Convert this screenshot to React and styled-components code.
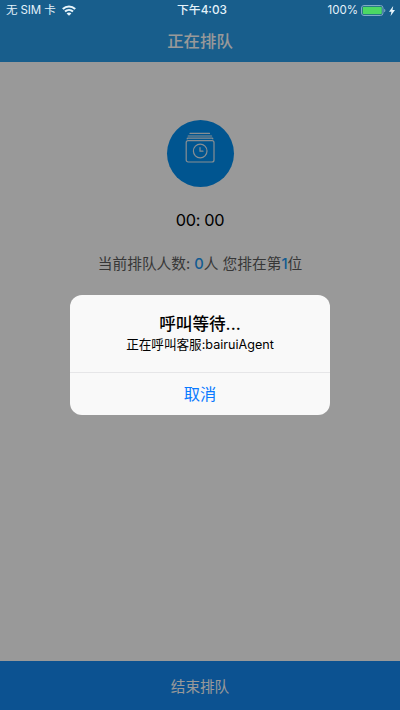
import React from "react";
import styled, { createGlobalStyle } from "styled-components";

const GlobalStyle = createGlobalStyle`
  * {
    box-sizing: border-box;
  }
  body {
    margin: 0;
    font-family: Inter, "Noto Sans CJK SC", sans-serif;
  }
`;

const Screen = styled.div`
  position: relative;
  display: flex;
  flex-direction: column;
  width: 400px;
  height: 710px;
  overflow: hidden;
  background: #fff;
`;

const Header = styled.header`
  display: flex;
  flex-direction: column;
  height: 62px;
  background: #289de9;
`;

const StatusBar = styled.div`
  position: relative;
  z-index: 2;
  display: grid;
  grid-template-columns: 1fr auto 1fr;
  align-items: center;
  height: 21px;
  padding: 0 5px 0 6px;
  color: #e4f2fa;
  font-size: 11.5px;
  line-height: 21px;
  white-space: nowrap;
`;

const StatusSide = styled.div`
  display: flex;
  align-items: center;
  justify-content: ${(props) => (props.$end ? "flex-end" : "flex-start")};
  gap: ${(props) => (props.$end ? "3px" : "6px")};
`;

const Carrier = styled.span`
  letter-spacing: -0.1px;
`;

const Clock = styled.span`
  font-size: 11.8px;
  font-weight: 500;
  padding-left: 3px;
`;

const Title = styled.h1`
  margin: 0;
  color: #fff;
  font-size: 16.4px;
  font-weight: 500;
  line-height: 40px;
  text-align: center;
`;

const Content = styled.main`
  display: flex;
  flex: 1;
  flex-direction: column;
  align-items: center;
  padding-top: 58px;
`;

const QueueBadge = styled.div`
  display: flex;
  justify-content: center;
  width: 67px;
  height: 67px;
  padding-top: 11px;
  border-radius: 50%;
  background: #008ef0;
`;

const Timer = styled.div`
  margin-top: 20px;
  color: #000;
  font-size: 16.3px;
  letter-spacing: -0.35px;
  line-height: 26px;
`;

const QueueInfo = styled.p`
  margin: 18px 0 0;
  color: #5c5c5c;
  font-size: 14.7px;
  line-height: 26px;
  white-space: nowrap;
`;

const Count = styled.span`
  color: #1e98f2;
  font-weight: 500;
`;

const EndButton = styled.button`
  height: 49px;
  padding: 0 0 1px;
  border: 0;
  background: #1489f2;
  color: #fff;
  font: inherit;
  font-size: 14.6px;
`;

const Backdrop = styled.div`
  position: absolute;
  inset: 0;
  display: flex;
  align-items: center;
  justify-content: center;
  background: rgba(0, 0, 0, 0.4);
`;

const Alert = styled.div`
  display: flex;
  flex-direction: column;
  width: 260px;
  height: 120px;
  border-radius: 12px;
  background: #f9f9f9;
  text-align: center;
  overflow: hidden;
`;

const AlertBody = styled.div`
  flex: 1;
  padding-top: 18px;
`;

const AlertTitle = styled.h2`
  margin: 0;
  color: #000;
  font-size: 16.6px;
  font-weight: 500;
  line-height: 22px;
`;

const AlertMessage = styled.p`
  margin: 1px 0 0;
  color: #000;
  font-size: 12.6px;
  line-height: 18px;
`;

const AlertButton = styled.button`
  height: 43px;
  padding: 0 0 2px;
  border: 0;
  border-top: 1px solid #e6e6e8;
  background: transparent;
  color: #0a7aff;
  font: inherit;
  font-size: 16.3px;
`;

function WifiIcon() {
  return (
    <svg width="14" height="11" viewBox="0 0 14 11" fill="none" stroke="#e9f6fc">
      <path d="M0.8 4.1C4.4 0.6 9.6 0.6 13.2 4.1" strokeWidth="2.1" />
      <path d="M3 6.6C5.3 4.5 8.7 4.5 11 6.6" strokeWidth="2" />
      <path d="M7 10.8L4.6 8.4C5.9 7.2 8.1 7.2 9.4 8.4Z" fill="#e9f6fc" stroke="none" />
    </svg>
  );
}

function BatteryIcon() {
  return (
    <svg width="25" height="11" viewBox="0 0 25 11">
      <rect x="0.5" y="0.5" width="21.5" height="10" rx="2.5" fill="none" stroke="#80aac5" />
      <rect x="1.7" y="1.7" width="19.1" height="7.6" rx="1.3" fill="#4cd964" />
      <path d="M23.2 3.7C24.8 4.2 24.8 6.8 23.2 7.3Z" fill="#80aac5" />
    </svg>
  );
}

function BoltIcon() {
  return (
    <svg width="6" height="10" viewBox="0 0 6 10">
      <path d="M4.2 0L0 5.8H2.4L1.6 10L6 4H3.5Z" fill="#e9f6fc" />
    </svg>
  );
}

function QueueIcon() {
  return (
    <svg width="30" height="32" viewBox="0 0 30 32" fill="none" stroke="#e3edf4" strokeWidth="1.2" strokeLinecap="round">
      <path d="M5 2.4H24.5M3.2 5H26.6M2.2 7.8C2.2 7.4 2.5 7.2 3 7.2H27C27.5 7.2 27.8 7.4 27.8 7.8" />
      <rect x="1.2" y="9.6" width="27.8" height="21.4" rx="2" />
      <circle cx="15.2" cy="20" r="6.8" />
      <path d="M15 16.6V20.2H18" />
    </svg>
  );
}

export default function App() {
  return (
    <>
      <GlobalStyle />
      <Screen>
        <Header>
          <StatusBar>
            <StatusSide>
              <Carrier>无 SIM 卡</Carrier>
              <WifiIcon />
            </StatusSide>
            <Clock>下午4:03</Clock>
            <StatusSide $end>
              <span>100%</span>
              <BatteryIcon />
              <BoltIcon />
            </StatusSide>
          </StatusBar>
          <Title>正在排队</Title>
        </Header>
        <Content>
          <QueueBadge>
            <QueueIcon />
          </QueueBadge>
          <Timer>00: 00</Timer>
          <QueueInfo>
            当前排队人数: <Count>0</Count>人 您排在第<Count>1</Count>位
          </QueueInfo>
        </Content>
        <EndButton>结束排队</EndButton>
        <Backdrop>
          <Alert>
            <AlertBody>
              <AlertTitle>呼叫等待...</AlertTitle>
              <AlertMessage>正在呼叫客服:bairuiAgent</AlertMessage>
            </AlertBody>
            <AlertButton>取消</AlertButton>
          </Alert>
        </Backdrop>
      </Screen>
    </>
  );
}
